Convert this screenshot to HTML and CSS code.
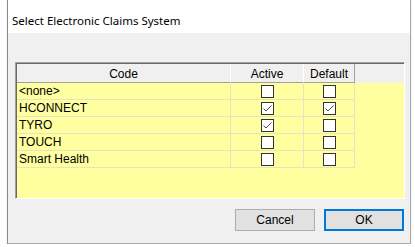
FILE: index.html
```html
<!DOCTYPE html>
<html lang="en">
<head>
    <meta charset="UTF-8">
    <title>Select Electronic Claims System</title>
    <link rel="stylesheet" href="styles.css">
</head>
<body>

    <div class="window">
        <div class="title-bar">Select Electronic Claims System</div>

        <div class="content">
            <div class="grid">
                <div class="grid-head">
                    <div class="head-cell">Code</div>
                    <div class="head-cell">Active</div>
                    <div class="head-cell last">Default</div>
                    <div class="head-fill"></div>
                </div>

                <div class="grid-row">
                    <div class="cell code">&lt;none&gt;</div>
                    <div class="cell"><span class="check"></span></div>
                    <div class="cell"><span class="check"></span></div>
                </div>
                <div class="grid-row">
                    <div class="cell code">HCONNECT</div>
                    <div class="cell"><span class="check on"><svg viewBox="0 0 11 11"><polyline points="1.5,5.5 4,8 9.5,2.5"/></svg></span></div>
                    <div class="cell"><span class="check on"><svg viewBox="0 0 11 11"><polyline points="1.5,5.5 4,8 9.5,2.5"/></svg></span></div>
                </div>
                <div class="grid-row">
                    <div class="cell code">TYRO</div>
                    <div class="cell"><span class="check on"><svg viewBox="0 0 11 11"><polyline points="1.5,5.5 4,8 9.5,2.5"/></svg></span></div>
                    <div class="cell"><span class="check"></span></div>
                </div>
                <div class="grid-row">
                    <div class="cell code">TOUCH</div>
                    <div class="cell"><span class="check"></span></div>
                    <div class="cell"><span class="check"></span></div>
                </div>
                <div class="grid-row">
                    <div class="cell code">Smart Health</div>
                    <div class="cell"><span class="check"></span></div>
                    <div class="cell"><span class="check"></span></div>
                </div>
            </div>

            <div class="buttons">
                <button class="btn">Cancel</button>
                <button class="btn default">OK</button>
            </div>
        </div>
    </div>

</body>
</html>
```

FILE: styles.css
```css
body {
    margin: 0;
    background-color: #fff;
    font-family: "Liberation Sans", Arial, sans-serif;
    font-size: 12px;
}

.window {
    margin-left: 7px;
    width: 402px;
    height: 243px;
    border-left: 1px solid #8c8c8c;
    border-right: 1px solid #a8a8a8;
    border-bottom: 1px solid #a8a8a8;
    box-shadow: 0 1px 2px rgba(0, 0, 0, 0.12);
    background-color: #f0f0f0;
    display: flex;
    flex-direction: column;
}

.title-bar {
    height: 33px;
    background-color: #fff;
    font-family: "Noto Sans", sans-serif;
    font-size: 11.5px;
    line-height: 41px;
    padding-left: 4px;
    color: #000;
}

.content {
    padding: 29px 5px 0 7px;
}

.grid {
    height: 134px;
    border-top: 1px solid #a0a0a0;
    border-left: 1px solid #a0a0a0;
    border-right: 1px solid #fff;
    border-bottom: 1px solid #fff;
    box-shadow: inset 1px 1px 0 #696969;
    padding: 1px 0 0 1px;
    background-color: #ffffa0;
}

.grid-head,
.grid-row {
    display: grid;
    grid-template-columns: 214px 73px 51px 1fr;
}

.grid-head {
    height: 19px;
    background-color: #f0f0f0;
}

.head-cell {
    display: flex;
    align-items: center;
    justify-content: center;
    border-right: 1px solid #fff;
    border-bottom: 1px solid #a0a0a0;
    padding-top: 1px;
    color: #000;
}

.head-cell.last {
    border-right-color: #a0a0a0;
}

.grid-row .cell {
    height: 16px;
    line-height: 17px;
    border-right: 1px solid #e4e4c4;
    border-bottom: 1px solid #e4e4c4;
    display: flex;
    align-items: center;
    justify-content: center;
}

.grid-row .cell.code {
    justify-content: flex-start;
    padding-left: 2px;
    color: #000;
}

.check {
    width: 11px;
    height: 11px;
    border: 1px solid #333;
    background-color: #fff;
    display: flex;
}

.check svg {
    width: 11px;
    height: 11px;
    fill: none;
    stroke: #4a4a4a;
    stroke-width: 1;
}

.buttons {
    display: flex;
    justify-content: flex-end;
    gap: 9px;
    margin-top: 10px;
    padding-right: 1px;
}

.btn {
    width: 80px;
    height: 22px;
    background-color: #e1e1e1;
    border: 1px solid #adadad;
    font-family: "Liberation Sans", Arial, sans-serif;
    font-size: 12px;
    color: #000;
    padding: 0;
}

.btn.default {
    border: 2px solid #0078d7;
}
```
